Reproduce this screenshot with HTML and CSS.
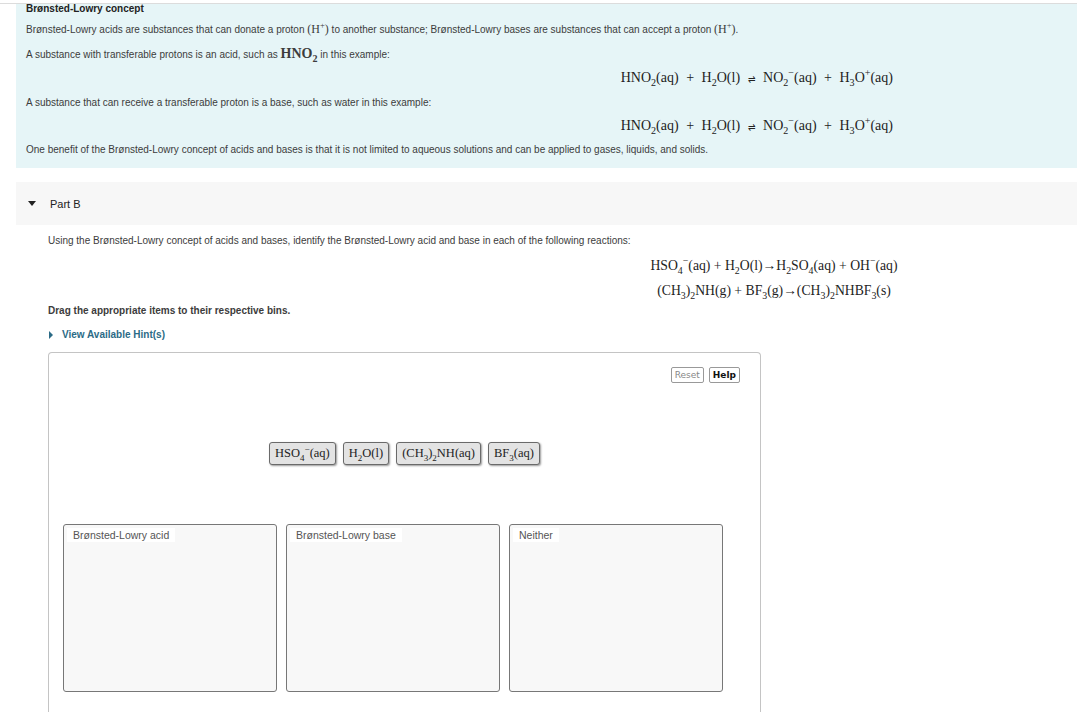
FILE: index.html
```html
<!DOCTYPE html>
<html lang="en">
<head>
    <meta charset="UTF-8">
    <title>Brønsted-Lowry concept</title>
    <link rel="stylesheet" href="styles.css">
</head>
<body>
    <div class="garis-atas"></div>

    <section class="konsep">
        <div class="judul">Brønsted-Lowry concept</div>
        <p class="p1">Brønsted-Lowry acids are substances that can donate a proton <span class="m">(H<sup>+</sup>)</span> to another substance; Brønsted-Lowry bases are substances that can accept a proton <span class="m">(H<sup>+</sup>)</span>.</p>
        <p class="p2">A substance with transferable protons is an acid, such as <span class="m besar">HNO<sub>2</sub></span> in this example:</p>
        <div class="persamaan eq1">HNO<sub>2</sub>(aq) <span class="op">+</span> H<sub>2</sub>O(l) <span class="op panah">&#8652;</span> NO<sub>2</sub><sup>&minus;</sup>(aq) <span class="op">+</span> H<sub>3</sub>O<sup>+</sup>(aq)</div>
        <p class="p3">A substance that can receive a transferable proton is a base, such as water in this example:</p>
        <div class="persamaan eq2">HNO<sub>2</sub>(aq) <span class="op">+</span> H<sub>2</sub>O(l) <span class="op panah">&#8652;</span> NO<sub>2</sub><sup>&minus;</sup>(aq) <span class="op">+</span> H<sub>3</sub>O<sup>+</sup>(aq)</div>
        <p class="p4">One benefit of the Brønsted-Lowry concept of acids and bases is that it is not limited to aqueous solutions and can be applied to gases, liquids, and solids.</p>
    </section>

    <div class="part-header">
        <span class="segitiga"></span>
        <span>Part B</span>
    </div>

    <section class="soal">
        <p class="pertanyaan">Using the Brønsted-Lowry concept of acids and bases, identify the Brønsted-Lowry acid and base in each of the following reactions:</p>
        <div class="reaksi">
            <div class="r1">HSO<sub>4</sub><sup>&minus;</sup>(aq) + H<sub>2</sub>O(l)&rarr;H<sub>2</sub>SO<sub>4</sub>(aq) + OH<sup>&minus;</sup>(aq)</div>
            <div class="r2">(CH<sub>3</sub>)<sub>2</sub>NH(g) + BF<sub>3</sub>(g)&rarr;(CH<sub>3</sub>)<sub>2</sub>NHBF<sub>3</sub>(s)</div>
        </div>
        <p class="instruksi">Drag the appropriate items to their respective bins.</p>
        <a class="hint" href="#"><span class="segitiga-kecil"></span>View Available Hint(s)</a>

        <div class="area-drop">
            <div class="tombol">
                <button class="reset">Reset</button>
                <button class="help">Help</button>
            </div>
            <div class="item-list">
                <div class="item">HSO<sub>4</sub><sup>&minus;</sup>(aq)</div>
                <div class="item">H<sub>2</sub>O(l)</div>
                <div class="item">(CH<sub>3</sub>)<sub>2</sub>NH(aq)</div>
                <div class="item">BF<sub>3</sub>(aq)</div>
            </div>
            <div class="bins">
                <div class="bin"><span class="label">Brønsted-Lowry acid</span></div>
                <div class="bin"><span class="label">Brønsted-Lowry base</span></div>
                <div class="bin"><span class="label">Neither</span></div>
            </div>
        </div>
    </section>
</body>
</html>
```

FILE: styles.css
```css
body {
    font-family: "Liberation Sans", Arial, sans-serif;
    font-size: 10px;
    color: #3c3c3c;
    margin: 0;
    padding: 0;
    background-color: #fff;
}
sub, sup {
    font-size: 72%;
    line-height: 0;
}
.garis-atas {
    margin-top: 3px;
    height: 1px;
    background-color: #dcdcdc;
}
.konsep {
    margin-left: 16px;
    background-color: #e6f5f7;
    padding: 0 10px 11px 10px;
}
.konsep p {
    margin: 0;
    line-height: 14px;
    height: 14px;
}
.judul {
    font-weight: bold;
    color: #222;
    line-height: 10px;
    height: 10px;
}
.p1 { margin-top: 8px !important; }
.p2 { margin-top: 11px !important; }
.p3 { margin-top: 9px !important; }
.p4 { margin-top: 8px !important; }
.m {
    font-family: "Liberation Serif", "Times New Roman", serif;
    font-size: 12px;
}
.m.besar {
    font-size: 14px;
    font-weight: bold;
}
.persamaan {
    font-family: "Liberation Serif", "Times New Roman", serif;
    font-size: 14px;
    color: #222;
    line-height: 18px;
    height: 18px;
    text-align: right;
    padding-right: 174px;
}
.eq1 { margin-top: 8px; }
.eq2 { margin-top: 7px; }
.op {
    margin: 0 4px;
}
.panah {
    font-size: 9px;
}
.part-header {
    margin: 14px 0 0 16px;
    height: 43px;
    background-color: #f7f7f7;
    display: flex;
    align-items: center;
    font-size: 11px;
    color: #222;
}
.segitiga {
    width: 0;
    height: 0;
    border-left: 4px solid transparent;
    border-right: 4px solid transparent;
    border-top: 5px solid #222;
    margin: 0 14px 0 12px;
}
.soal {
    padding-left: 48px;
}
.pertanyaan {
    margin: 9px 0 0 0;
    line-height: 14px;
    height: 14px;
}
.reaksi {
    width: 400px;
    margin-left: 526px;
    text-align: center;
    font-family: "Liberation Serif", "Times New Roman", serif;
    font-size: 13.7px;
    color: #222;
}
.r1 {
    margin-top: 9px;
    line-height: 18px;
    height: 18px;
}
.r2 {
    margin-top: 7px;
    line-height: 18px;
    height: 18px;
}
.instruksi {
    margin: 4px 0 0 0;
    font-weight: bold;
    line-height: 14px;
    height: 14px;
}
.hint {
    display: flex;
    align-items: center;
    margin-top: 10px;
    line-height: 14px;
    height: 14px;
    color: #2b6b86;
    font-weight: bold;
    text-decoration: none;
}
.segitiga-kecil {
    width: 0;
    height: 0;
    border-top: 4px solid transparent;
    border-bottom: 4px solid transparent;
    border-left: 4px solid #2b6b86;
    margin: 0 9px 0 1px;
}
.area-drop {
    margin-top: 10px;
    width: 713px;
    height: 360px;
    border: 1px solid #c4c4c4;
    border-bottom: none;
    border-radius: 4px 4px 0 0;
    padding-top: 14px;
    box-sizing: border-box;
}
.tombol {
    display: flex;
    justify-content: flex-end;
    gap: 5px;
    padding-right: 20px;
    height: 16px;
}
.tombol button {
    font-family: "DejaVu Sans", sans-serif;
    font-size: 9px;
    height: 16px;
    padding: 0 3px;
    background-color: #fff;
    border: 1px solid #999;
    border-radius: 2px;
    cursor: pointer;
}
.reset {
    color: #888;
}
.help {
    color: #111;
    font-weight: bold;
}
.item-list {
    display: flex;
    justify-content: center;
    gap: 7px;
    margin-top: 59px;
}
.item {
    font-family: "Liberation Serif", "Times New Roman", serif;
    font-size: 12.5px;
    color: #222;
    height: 23px;
    line-height: 21px;
    padding: 0 5px;
    background-color: #e3e3e3;
    border: 1px solid #6a6a6a;
    border-radius: 3px;
    box-shadow: 1px 1px 2px #9a9a9a;
    box-sizing: border-box;
}
.bins {
    display: flex;
    gap: 9px;
    margin: 59px 0 0 14px;
}
.bin {
    width: 214px;
    height: 168px;
    background-color: #f8f8f8;
    border: 1px solid #777;
    border-radius: 3px;
    box-sizing: border-box;
    padding: 3px 0 0 3px;
}
.label {
    display: inline-block;
    background-color: #fff;
    color: #555;
    font-size: 10.5px;
    line-height: 14px;
    padding: 0 6px;
}
```
